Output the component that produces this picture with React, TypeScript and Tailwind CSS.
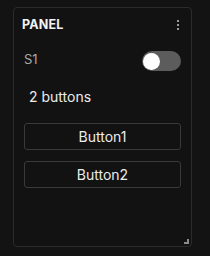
import React from "react";

export default function App() {
  return (
    <div className="w-[210px] h-[256px] bg-[#131313] pt-[7px] pl-[13px]" style={{ fontFamily: "Inter, 'Noto Sans', sans-serif" }}>
      <div className="relative w-[179px] h-[240px] border border-[#2b2b2b] rounded-[4px] bg-[#121212] flex flex-col">
        <div className="flex items-center justify-between pl-[8px] pr-[12px] pt-[6px] h-[27px]">
          <span className="text-[12.5px] font-bold text-[#f2f2f2] tracking-[0.2px] leading-[16px]">PANEL</span>
          <div className="flex flex-col gap-[2px]">
            <span className="block w-[2px] h-[2px] bg-[#9a9a9a]" />
            <span className="block w-[2px] h-[2px] bg-[#9a9a9a]" />
            <span className="block w-[2px] h-[2px] bg-[#9a9a9a]" />
          </div>
        </div>
        <div className="flex items-center justify-between px-[10px] mt-[16px]">
          <span className="text-[13px] text-[#a8a8a8] leading-[20px] -mt-[4px]">S1</span>
          <div className="w-[39px] h-[20px] rounded-full bg-[#5c5c5c] flex items-center pl-[1px]">
            <div className="w-[17px] h-[17px] rounded-full bg-white" />
          </div>
        </div>
        <div className="px-[15px] mt-[16px] text-[14px] text-[#ececec] leading-[20px]">2 buttons</div>
        <div className="flex flex-col gap-[11px] px-[10px] mt-[16px]">
          <button className="h-[27px] w-full border border-[#3a3a3a] rounded-[3px] bg-[#121212] text-[14px] text-[#ececec]">Button1</button>
          <button className="h-[27px] w-full border border-[#3a3a3a] rounded-[3px] bg-[#121212] text-[14px] text-[#ececec]">Button2</button>
        </div>
        <svg className="absolute right-[2px] bottom-[2px]" width="5" height="5" viewBox="0 0 5 5">
          <path d="M3 0H5V5H0V3H3Z" fill="#8a8a8a" />
        </svg>
      </div>
    </div>
  );
}
